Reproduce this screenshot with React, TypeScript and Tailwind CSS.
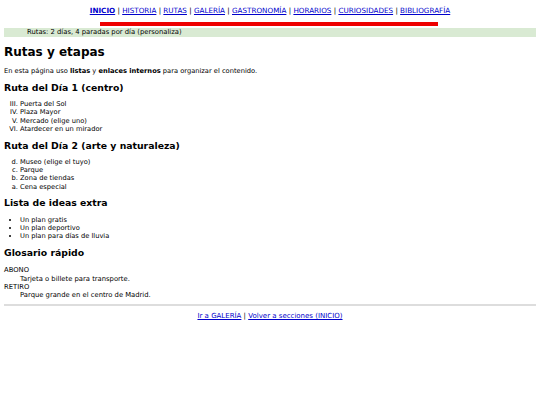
export default function App() {
  const links = ["HISTORIA", "RUTAS", "GALERÍA", "GASTRONOMÍA", "HORARIOS", "CURIOSIDADES", "BIBLIOGRAFÍA"];
  return (
    <div className="px-[4px] pt-[6px] text-[6.8px] leading-[8.2px] text-black bg-white min-h-[405px]" style={{ fontFamily: '"DejaVu Sans", Verdana, sans-serif' }}>
      <nav className="text-center text-[7.2px] leading-[10px]">
        <a href="#inicio" className="font-bold text-[#00c] underline">INICIO</a>
        {links.map((l) => (
          <span key={l}>
            {" | "}
            <a href={"#" + l} className="text-[#00c] underline">{l}</a>
          </span>
        ))}
      </nav>
      <div className="mx-auto mt-[6px] h-[4px] w-[338px] bg-[#e00] relative left-[-1px]" />
      <div className="mt-[2px] bg-[#d9ead3] pl-[23px] h-[9px] leading-[9px]">Rutas: 2 días, 4 paradas por día (personaliza)</div>

      <h1 className="mt-[8px] text-[12px] leading-[14px] font-bold">Rutas y etapas</h1>
      <p className="mt-[8px] text-[6.7px]">
        En esta página uso <b>listas</b> y <b>enlaces internos</b> para organizar el contenido.
      </p>

      <h2 className="mt-[7px] text-[9.3px] leading-[11px] font-bold">Ruta del Día 1 (centro)</h2>
      <ol start={3} className="mt-[7px] pl-[16px] list-[upper-roman] text-[6.7px]">
        <li>Puerta del Sol</li>
        <li>Plaza Mayor</li>
        <li>Mercado (elige uno)</li>
        <li>Atardecer en un mirador</li>
      </ol>

      <h2 className="mt-[7px] text-[9.3px] leading-[11px] font-bold">Ruta del Día 2 (arte y naturaleza)</h2>
      <ol reversed className="mt-[7px] pl-[16px] list-[lower-alpha] text-[6.7px]">
        <li>Museo (elige el tuyo)</li>
        <li>Parque</li>
        <li>Zona de tiendas</li>
        <li>Cena especial</li>
      </ol>

      <h2 className="mt-[6px] text-[9.3px] leading-[11px] font-bold">Lista de ideas extra</h2>
      <ul className="mt-[8px] pl-[16px] list-disc text-[6.7px]">
        <li>Un plan gratis</li>
        <li>Un plan deportivo</li>
        <li>Un plan para días de lluvia</li>
      </ul>

      <h2 className="mt-[7px] text-[9.3px] leading-[11px] font-bold">Glosario rápido</h2>
      <dl className="mt-[8px]">
        <dt>ABONO</dt>
        <dd className="pl-[16px]">Tarjeta o billete para transporte.</dd>
        <dt>RETIRO</dt>
        <dd className="pl-[16px]">Parque grande en el centro de Madrid.</dd>
      </dl>

      <hr className="mt-[5px] border-t-[2px] border-[#ddd]" />
      <p className="mt-[6px] text-center text-[7px]">
        <a href="#galeria" className="text-[#00c] underline">Ir a GALERÍA</a>
        {" | "}
        <a href="#inicio" className="text-[#00c] underline">Volver a secciones (INICIO)</a>
      </p>
    </div>
  );
}
